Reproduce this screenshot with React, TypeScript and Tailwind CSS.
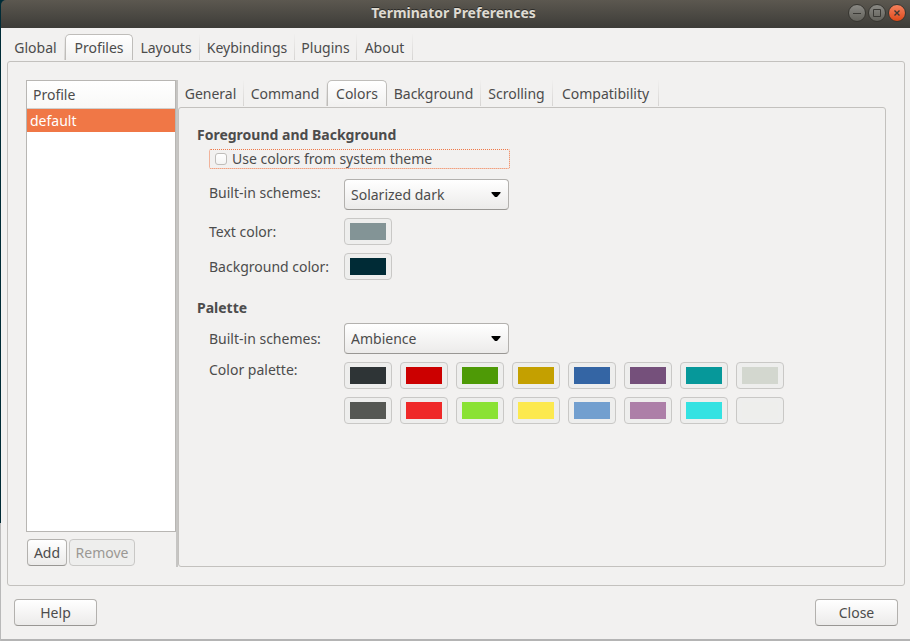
import React from "react";

type Tab = { label: string; width: string; active?: boolean };

const mainTabs: Tab[] = [
  { label: "Global", width: "w-[58px]" },
  { label: "Profiles", width: "w-[68px]", active: true },
  { label: "Layouts", width: "w-[67px]" },
  { label: "Keybindings", width: "w-[95px]" },
  { label: "Plugins", width: "w-[62px]" },
  { label: "About", width: "w-[56px]" },
];

const profileTabs: Tab[] = [
  { label: "General", width: "w-[66px]" },
  { label: "Command", width: "w-[83px]" },
  { label: "Colors", width: "w-[60px]", active: true },
  { label: "Background", width: "w-[94px]" },
  { label: "Scrolling", width: "w-[72px]" },
  { label: "Compatibility", width: "w-[106px]" },
];

const palette = [
  { name: "Black", color: "bg-[#2e3436]" },
  { name: "Red", color: "bg-[#cc0000]" },
  { name: "Green", color: "bg-[#4e9a06]" },
  { name: "Yellow", color: "bg-[#c4a000]" },
  { name: "Blue", color: "bg-[#3465a4]" },
  { name: "Magenta", color: "bg-[#75507b]" },
  { name: "Cyan", color: "bg-[#06989a]" },
  { name: "White", color: "bg-[#d3d7cf]" },
  { name: "Bright black", color: "bg-[#555753]" },
  { name: "Bright red", color: "bg-[#ef2929]" },
  { name: "Bright green", color: "bg-[#8ae234]" },
  { name: "Bright yellow", color: "bg-[#fce94f]" },
  { name: "Bright blue", color: "bg-[#729fcf]" },
  { name: "Bright magenta", color: "bg-[#ad7fa8]" },
  { name: "Bright cyan", color: "bg-[#34e2e2]" },
  { name: "Bright white", color: "bg-[#eeeeec]" },
];

function TabBar({ tabs, label }: { tabs: Tab[]; label: string }) {
  return (
    <div role="tablist" aria-label={label} className="flex h-[27px] shrink-0">
      {tabs.map((tab) => (
        <button
          key={tab.label}
          type="button"
          role="tab"
          aria-selected={!!tab.active}
          className={`flex h-[26px] shrink-0 items-center justify-center whitespace-nowrap ${tab.width} ${
            tab.active
              ? "rounded-t-[5px] border border-b-0 border-[#bfbdba] bg-linear-to-b from-white to-[#f2f1f0]"
              : "border-r border-[#dedddb] pt-0.5 [border-image:linear-gradient(to_bottom,transparent,#d5d3d1)_1]"
          }`}
        >
          {tab.label}
        </button>
      ))}
    </div>
  );
}

function PushButton({ children, width, disabled }: { children: string; width: string; disabled?: boolean }) {
  return (
    <button
      type="button"
      disabled={disabled}
      className={`flex h-[27px] items-center justify-center rounded-[4px] border ${width} ${
        disabled
          ? "border-[#c9c8c6] bg-[#eeeeed] text-[#9b9894]"
          : "border-[#b3b1ae] border-b-[#999794] bg-linear-to-b from-white to-[#ecebea]"
      }`}
    >
      {children}
    </button>
  );
}

function SchemeSelect({ id, options }: { id: string; options: string[] }) {
  return (
    <div className="relative">
      <select
        id={id}
        className="block h-[31px] w-[165px] appearance-none rounded-[4px] border border-[#b3b1ae] border-b-[#999794] bg-linear-to-b from-white to-[#ecebea] pl-1.5 pr-6"
      >
        {options.map((o) => (
          <option key={o}>{o}</option>
        ))}
      </select>
      <svg viewBox="0 0 10 6" className="pointer-events-none absolute right-2 top-[13px] h-1.5 w-2.5" aria-hidden="true">
        <path d="M0.5 0H9.5V1L6 5H4L0.5 1Z" fill="#000" />
      </svg>
    </div>
  );
}

function ColorButton({ id, name, color }: { id?: string; name: string; color: string }) {
  return (
    <button
      id={id}
      type="button"
      aria-label={name}
      className="flex h-[27px] w-12 items-center justify-center rounded-[4px] border border-[#c9c8c6] bg-[#eeeeed]"
    >
      <span className={`block h-[17px] w-9 ${color}`} />
    </button>
  );
}

function WindowButton({ label, close, children }: { label: string; close?: boolean; children: React.ReactNode }) {
  return (
    <button
      type="button"
      aria-label={label}
      className={`size-[18px] rounded-full border border-[#373631] ${
        close ? "bg-linear-to-b from-[#f4815c] to-[#dd4814]" : "bg-linear-to-b from-[#8b8a85] to-[#62615b]"
      }`}
    >
      <svg viewBox="0 0 16 16" className="size-4" fill="none" stroke="#3a3935" aria-hidden="true">
        {children}
      </svg>
    </button>
  );
}

export default function App() {
  return (
    <div className="flex min-h-screen bg-[#f2f1f0] font-['Noto_Sans',sans-serif] text-[14px] leading-5 text-[#4c4c4c]">
      <div className="flex w-px shrink-0 flex-col bg-[#b9b9b9]">
        <div className="mb-[118px] grow bg-[#002b36]" />
      </div>

      <div className="flex min-w-0 grow flex-col border-b-2 border-[#b4b4b4]">
        <div className="bg-[#002b36]">
          <header className="grid h-7 grid-cols-[1fr_auto_1fr] items-center rounded-tl-[5px] bg-linear-to-b from-[#5c5850] to-[#3d3c38] pb-0.5 pr-1">
            <span />
            <h1 className="font-bold text-[#dfdbd2] [text-shadow:0_-1px_0_#2c2b28]">Terminator Preferences</h1>
            <div className="flex justify-end gap-0.5">
              <WindowButton label="Minimize">
                <path d="M4 8.5H12" />
              </WindowButton>
              <WindowButton label="Maximize">
                <path d="M4.5 4.5H11.5V11.5H4.5Z" />
              </WindowButton>
              <WindowButton label="Close window" close>
                <path d="M5.5 5.5L10.5 10.5M10.5 5.5L5.5 10.5" strokeWidth="1.4" />
              </WindowButton>
            </div>
          </header>
        </div>

        <main className="flex grow flex-col pl-1.5 pr-[5px] pt-1.5">
          <TabBar tabs={mainTabs} label="Preferences" />

          <section className="flex grow rounded-[3px] border border-[#c3c1be] p-[18px]">
            <aside className="flex w-[150px] shrink-0 flex-col">
              <div className="grow border border-[#b8b6b3] bg-white">
                <div className="flex h-7 items-center border-b border-[#d0cfcd] bg-linear-to-b from-white to-[#f8f8f7] px-1.5">
                  Profile
                </div>
                <ul role="listbox" aria-label="Profile">
                  <li role="option" aria-selected="true" className="flex h-[23px] items-center bg-[#f07746] px-[3px] text-white">
                    default
                  </li>
                </ul>
              </div>
              <div className="flex gap-0.5 pb-px pl-px pt-[7px]">
                <PushButton width="w-10">Add</PushButton>
                <PushButton width="w-[66px]" disabled>
                  Remove
                </PushButton>
              </div>
            </aside>

            <div className="w-0.5 shrink-0 bg-[#c6c5c3]" />

            <div className="flex min-w-0 grow flex-col">
              <TabBar tabs={profileTabs} label="Profile settings" />

              <div className="grow rounded-[3px] border border-[#c3c1be] pl-[18px] pt-[17px]">
                <h2 className="font-bold">Foreground and Background</h2>
                <div className="flex flex-col pl-3">
                  <label className="mt-1 flex h-5 w-[301px] items-center gap-[5px] rounded-[2px] border border-dotted border-[#f07746] pl-[5px]">
                    <input
                      type="checkbox"
                      className="size-3 appearance-none rounded-[3px] border border-[#bfbdba] bg-linear-to-b from-white to-[#f4f4f3]"
                    />
                    Use colors from system theme
                  </label>
                  <div className="mt-2.5 flex">
                    <label htmlFor="color-scheme" className="w-[135px] pt-1">
                      Built-in schemes:
                    </label>
                    <SchemeSelect id="color-scheme" options={["Solarized dark", "Solarized light", "Ambience"]} />
                  </div>
                  <div className="mt-2 flex items-center">
                    <label htmlFor="text-color" className="w-[135px]">
                      Text color:
                    </label>
                    <ColorButton id="text-color" name="Text color" color="bg-[#839496]" />
                  </div>
                  <div className="mt-2 flex items-center">
                    <label htmlFor="background-color" className="w-[135px]">
                      Background color:
                    </label>
                    <ColorButton id="background-color" name="Background color" color="bg-[#002b36]" />
                  </div>
                </div>

                <h2 className="mt-[18px] font-bold">Palette</h2>
                <div className="flex flex-col pl-3">
                  <div className="mt-[5px] flex items-center">
                    <label htmlFor="palette-scheme" className="w-[135px]">
                      Built-in schemes:
                    </label>
                    <SchemeSelect id="palette-scheme" options={["Ambience", "Tango", "Linux", "Solarized"]} />
                  </div>
                  <div className="mt-2 flex">
                    <span id="palette-label" className="w-[135px] leading-4">
                      Color palette:
                    </span>
                    <div role="group" aria-labelledby="palette-label" className="grid grid-cols-8 gap-2">
                      {palette.map((p) => (
                        <ColorButton key={p.name} name={p.name} color={p.color} />
                      ))}
                    </div>
                  </div>
                </div>
              </div>
            </div>
          </section>

          <footer className="flex justify-between px-[7px] py-[13px]">
            <PushButton width="w-[83px]">Help</PushButton>
            <PushButton width="w-[83px]">Close</PushButton>
          </footer>
        </main>
      </div>
    </div>
  );
}
